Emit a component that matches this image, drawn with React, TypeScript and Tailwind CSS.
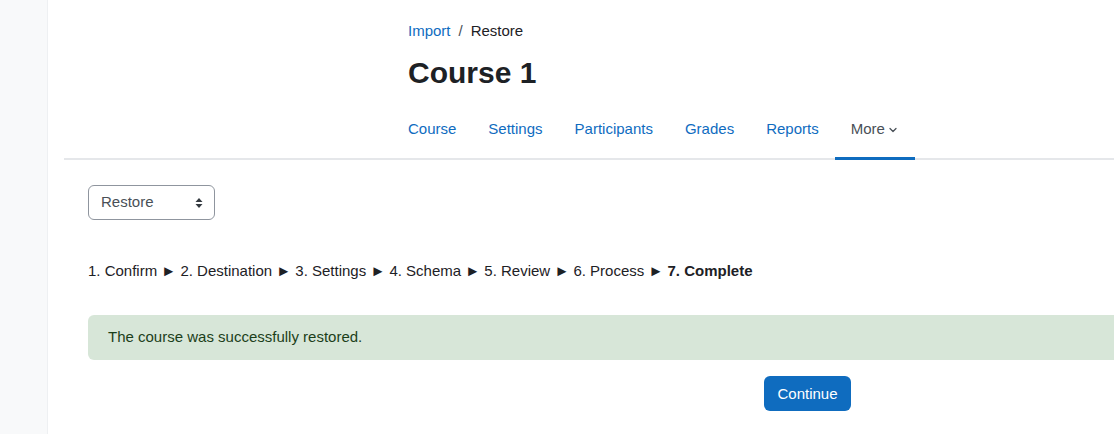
import { ChevronDown } from "lucide-react";

const TABS = ["Course", "Settings", "Participants", "Grades", "Reports"];
const STEPS = ["1. Confirm", "2. Destination", "3. Settings", "4. Schema", "5. Review", "6. Process"];

export default function App() {
  return (
    <div
      className="flex h-[434px] overflow-hidden bg-white text-[15px] text-[#1d2125]"
      style={{ fontFamily: '"Liberation Sans", Arial, sans-serif' }}
    >
      <aside className="w-[48px] shrink-0 bg-[#f8f9fa] border-r border-[#eef0f2]" />

      <main className="flex-1 min-w-0 pl-4">
        <header className="border-b-2 border-[#e5e7ea]">
          <div className="pl-[344px] pt-[20px]">
            <nav className="flex items-center gap-2 leading-[22px]">
              <a className="text-[#0f6cbf]">Import</a>
              <span className="text-[#495057]">/</span>
              <span>Restore</span>
            </nav>
            <h1 className="mt-[13px] text-[30px] font-bold leading-[36px]">Course 1</h1>
            <ul className="mt-[20px] -ml-4 flex">
              {TABS.map((t) => (
                <li key={t}>
                  <a className="block px-4 pt-[7px] pb-[18px] leading-[22px] text-[#0f6cbf]">{t}</a>
                </li>
              ))}
              <li className="-mb-[2px] border-b-[3px] border-[#0f6cbf]">
                <a className="flex items-center gap-[2px] px-4 pt-[7px] pb-[17px] leading-[22px] text-[#495057]">
                  More
                  <ChevronDown size={12} strokeWidth={2.5} className="mt-[2px]" />
                </a>
              </li>
            </ul>
          </div>
        </header>

        <section className="pl-6 pt-[25px]">
          <div className="flex h-[35px] w-[127px] items-center justify-between rounded-[6px] border border-[#8f959e] pl-[12px] pr-[11px] text-[#495057]">
            <span>Restore</span>
            <svg width="8" height="12" viewBox="0 0 8 12" className="text-[#343a40]">
              <path d="M4 1 L7.5 5 H0.5 Z M4 11 L0.5 7 H7.5 Z" fill="currentColor" />
            </svg>
          </div>

          <p className="mt-[40px] leading-[22px]">
            {STEPS.map((s) => (
              <span key={s}>
                {s} <span className="text-[15px]">►</span>{" "}
              </span>
            ))}
            <strong className="font-bold">7. Complete</strong>
          </p>

          <div className="mt-[33px] rounded-l-[6px] bg-[#d7e6d8] px-5 py-[11px] pb-[12px] leading-[22px] text-[#1c3f1a]">
            The course was successfully restored.
          </div>

          <button className="mt-[16px] ml-[676px] h-[35px] w-[87px] rounded-[6px] bg-[#0f6cbf] text-white leading-[22px]">
            Continue
          </button>

          <h2 className="mt-[20px] pl-[20px] text-[22px] font-bold leading-[28px]">
            Restoring backup into the selected course
          </h2>
        </section>
      </main>
    </div>
  );
}
